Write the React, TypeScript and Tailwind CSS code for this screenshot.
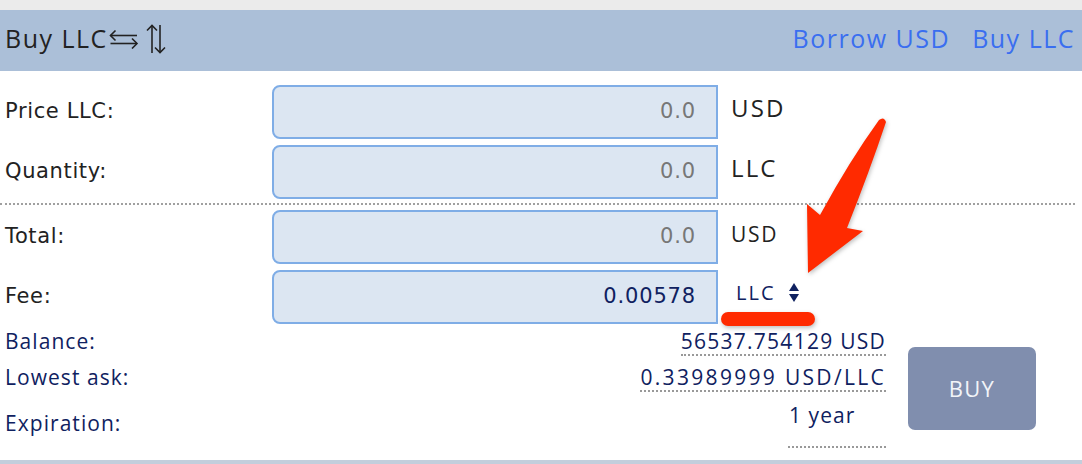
const SANS = "font-['Open_Sans',sans-serif]";
const DEJAVU = "font-['DejaVu_Sans',sans-serif]";

type Row = { label: string; value: string; unit: string; filled?: boolean };

const TOP_ROWS: Row[] = [
  { label: "Price LLC:", value: "0.0", unit: "USD" },
  { label: "Quantity:", value: "0.0", unit: "LLC" },
];

function Field({ value, filled }: { value: string; filled?: boolean }) {
  return (
    <div
      className={`flex h-[54px] w-[446px] items-center justify-end rounded-l-[8px] border-2 border-[#7fade6] bg-[#dce6f2] pr-[20px] text-[21px] tracking-[0.04em] ${DEJAVU} ${
        filled ? "text-[#0f2160]" : "text-[#777]"
      }`}
    >
      {value}
    </div>
  );
}

function InputRow({ row }: { row: Row }) {
  return (
    <div className="flex items-center">
      <div className={`w-[267px] text-[21px] tracking-[0.03em] text-[#222] ${DEJAVU}`}>{row.label}</div>
      <Field value={row.value} />
      <div className={`ml-[13px] mb-[8px] text-[24px] tracking-[0.09em] text-[#222] ${SANS}`}>{row.unit}</div>
    </div>
  );
}

function SortIcon() {
  return (
    <svg width="10" height="20" viewBox="0 0 10 20" className="text-[#0f2160]">
      <path d="M5 0 L10 8 L0 8 Z" fill="currentColor" />
      <path d="M0 11 L10 11 L5 19 Z" fill="currentColor" />
    </svg>
  );
}

function SwapArrows() {
  return (
    <span className="ml-[1px] flex items-center gap-[7px] text-[#222]">
      <svg width="30" height="20" viewBox="0 0 30 20" fill="none" stroke="currentColor" strokeWidth="1.6">
        <path d="M1.5 6.5 H28" />
        <path d="M6.5 1.5 L1.5 6.5 L6.5 11.5" />
        <path d="M1.5 14.5 H28" />
        <path d="M23 9.5 L28 14.5 L23 19.5" />
      </svg>
      <svg width="20" height="30" viewBox="0 0 20 30" fill="none" stroke="currentColor" strokeWidth="1.6">
        <path d="M6 1.5 V29" />
        <path d="M1 6.5 L6 1.5 L11 6.5" />
        <path d="M14 1 V28.5" />
        <path d="M9 23.5 L14 28.5 L19 23.5" />
      </svg>
    </span>
  );
}

function Annotation() {
  return (
    <svg
      width="1082"
      height="464"
      className="pointer-events-none absolute left-0 top-0"
      style={{ filter: "drop-shadow(1px 2px 2px rgba(0,0,0,0.25))" }}
    >
      <path
        d="M879 120 Q884 116 886 122 Q870 170 847 228 L863 231 L808 273 L807 204 L820 215 Q850 160 879 120 Z"
        fill="#ff2a00"
      />
      <rect x="721" y="312" width="94" height="14" rx="7" fill="#ff2a00" />
    </svg>
  );
}

export default function App() {
  return (
    <div className="relative h-[464px] w-[1082px] overflow-hidden bg-white">
      <div className="h-[10px] bg-[#ebebeb]" />
      <div className={`flex h-[61px] items-center justify-between bg-[#abbfd8] pl-[5px] pr-[7px] ${SANS}`}>
        <div className="mt-[-3px] flex items-center text-[25px] tracking-[0.06em] text-[#222]">
          Buy LLC
          <SwapArrows />
        </div>
        <div className="mt-[-4px] flex gap-[22px] text-[25px] tracking-[0.06em] text-[#3a6ef0]">
          <span>Borrow USD</span>
          <span>Buy LLC</span>
        </div>
      </div>

      <div className="flex flex-col gap-[6px] pl-[5px] pt-[14px]">
        {TOP_ROWS.map((r) => (
          <InputRow key={r.label} row={r} />
        ))}
      </div>

      <div className="mt-[4px] mr-[7px] border-b-2 border-dotted border-[#a0a0a0]" />

      <div className="flex flex-col gap-[6px] pl-[5px] pt-[5px]">
        <div className="flex items-center">
          <div className={`w-[267px] text-[21px] tracking-[0.03em] text-[#222] ${DEJAVU}`}>Total:</div>
          <Field value="0.0" />
          <div className={`ml-[13px] mb-[4px] text-[21px] tracking-[0.08em] text-[#222] ${SANS}`}>USD</div>
        </div>
        <div className="flex items-center">
          <div className={`w-[267px] text-[21px] tracking-[0.03em] text-[#222] ${DEJAVU}`}>Fee:</div>
          <Field value="0.00578" filled />
          <div className={`ml-[18px] mb-[8px] flex items-center gap-[14px] text-[20px] tracking-[0.1em] text-[#0f2160] ${SANS}`}>
            LLC
            <SortIcon />
          </div>
        </div>
      </div>

      <div className={`flex pl-[5px] pt-[4px] text-[21px] text-[#0f2160] ${SANS}`}>
        <div className="flex w-[881px] flex-col">
          <div className="flex h-[28px] items-center justify-between">
            <span className="tracking-[0.05em]">Balance:</span>
            <span className="border-b-2 border-dotted border-[#999] leading-[26px] tracking-[0.06em]">56537.754129 USD</span>
          </div>
          <div className="mt-[8px] flex h-[28px] items-center justify-between">
            <span className="tracking-[0.05em]">Lowest ask:</span>
            <span className="border-b-2 border-dotted border-[#999] leading-[26px] tracking-[0.11em]">0.33989999 USD/LLC</span>
          </div>
          <div className="mt-[6px] flex h-[50px] items-center justify-between">
            <span className="mt-[2px] tracking-[0.05em]">Expiration:</span>
            <span className="h-[50px] w-[98px] border-b-2 border-dotted border-[#999] pl-[1px] pt-[4px] leading-[26px] tracking-[0.05em]">
              1 year
            </span>
          </div>
        </div>
        <button
          className={`ml-[22px] mt-[19px] flex h-[83px] w-[128px] items-center justify-center rounded-[7px] bg-[#808eae] text-[22px] tracking-[0.06em] text-[#f2f4f8] ${SANS}`}
        >
          BUY
        </button>
      </div>

      <div className="absolute bottom-0 left-0 h-[4px] w-full bg-[#c3cedc]" />
      <Annotation />
    </div>
  );
}
